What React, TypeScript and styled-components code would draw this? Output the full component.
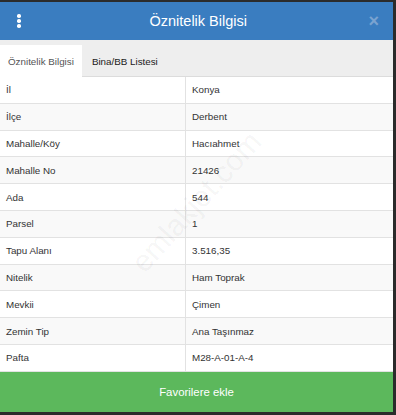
import styled, { createGlobalStyle } from 'styled-components';

interface Row {
  label: string;
  value: string;
}

const ROWS: Row[] = [
  { label: 'İl', value: 'Konya' },
  { label: 'İlçe', value: 'Derbent' },
  { label: 'Mahalle/Köy', value: 'Hacıahmet' },
  { label: 'Mahalle No', value: '21426' },
  { label: 'Ada', value: '544' },
  { label: 'Parsel', value: '1' },
  { label: 'Tapu Alanı', value: '3.516,35' },
  { label: 'Nitelik', value: 'Ham Toprak' },
  { label: 'Mevkii', value: 'Çimen' },
  { label: 'Zemin Tip', value: 'Ana Taşınmaz' },
  { label: 'Pafta', value: 'M28-A-01-A-4' },
];

const GlobalStyle = createGlobalStyle`
  html, body {
    margin: 0;
    padding: 0;
    background: #2b2b2b;
    font-family: "Liberation Sans", Arial, sans-serif;
  }
`;

const App = () => {
  return (
    <>
      <GlobalStyle />
      <Page>
        <Panel>
          <Header>
            <Kebab>
              <Dot />
              <Dot />
              <Dot />
            </Kebab>
            <Title>Öznitelik Bilgisi</Title>
            <Close>×</Close>
          </Header>
          <Tabs>
            <Tab active>Öznitelik Bilgisi</Tab>
            <Tab>Bina/BB Listesi</Tab>
          </Tabs>
          <Table>
            {ROWS.map((row, i) => (
              <TableRow key={row.label} striped={i % 2 === 1}>
                <Cell>{row.label}</Cell>
                <Cell divider>{row.value}</Cell>
              </TableRow>
            ))}
            <Watermark>emlakjet.com</Watermark>
          </Table>
          <FavButton>Favorilere ekle</FavButton>
        </Panel>
      </Page>
    </>
  );
};

const Page = styled.div`
  width: 396px;
  height: 415px;
  padding-top: 2px;
  box-sizing: border-box;
  background: #2b2b2b;
`;
const Panel = styled.div`
  width: 393px;
  height: 410px;
  display: flex;
  flex-direction: column;
  background: #fff;
`;
const Header = styled.div`
  height: 38px;
  display: flex;
  align-items: center;
  justify-content: space-between;
  padding: 0 14px 0 16px;
  background: #3a7dc0;
  color: #fff;
`;
const Kebab = styled.div`
  width: 6px;
  display: flex;
  flex-direction: column;
  align-items: center;
  gap: 1.5px;
`;
const Dot = styled.span`
  width: 3.5px;
  height: 3.5px;
  border-radius: 50%;
  background: #fff;
`;
const Title = styled.span`
  font-size: 14.5px;
  margin-left: 6px;
`;
const Close = styled.span`
  font-size: 18px;
  font-weight: 700;
  color: #7aa3d0;
  line-height: 1;
`;
const Tabs = styled.div`
  height: 37px;
  display: flex;
  align-items: flex-end;
  background: #eeeeee;
  border-bottom: 1px solid #dcdcdc;
  box-sizing: border-box;
`;
const Tab = styled.div<{ active?: boolean }>`
  height: 32px;
  display: flex;
  align-items: center;
  padding: 0 ${(p) => (p.active ? '8px 0 8px' : '8px 0 10px')};
  font-size: 9.8px;
  color: ${(p) => (p.active ? '#555' : '#1a1a1a')};
  background: ${(p) => (p.active ? '#fff' : 'transparent')};
  margin-bottom: -1px;
`;
const Table = styled.div`
  position: relative;
  overflow: hidden;
  display: flex;
  flex-direction: column;
`;
const TableRow = styled.div<{ striped?: boolean }>`
  height: 26.8px;
  display: grid;
  grid-template-columns: 185px 1fr;
  background: ${(p) => (p.striped ? '#f9f9f9' : '#fff')};
  border-bottom: 1px solid #e2e2e2;
  box-sizing: border-box;
`;
const Cell = styled.div<{ divider?: boolean }>`
  display: flex;
  align-items: center;
  padding-left: 6px;
  font-size: 9.8px;
  color: #333;
  border-left: ${(p) => (p.divider ? '1px solid #e2e2e2' : 'none')};
`;
const Watermark = styled.span`
  position: absolute;
  left: 108px;
  top: 108px;
  transform: rotate(-48deg);
  font-size: 30px;
  color: rgba(0, 0, 0, 0.05);
  pointer-events: none;
  white-space: nowrap;
`;
const FavButton = styled.div`
  flex: 1;
  display: flex;
  align-items: center;
  justify-content: center;
  background: #5cb85c;
  color: #fff;
  font-size: 11.4px;
`;

export default App;
